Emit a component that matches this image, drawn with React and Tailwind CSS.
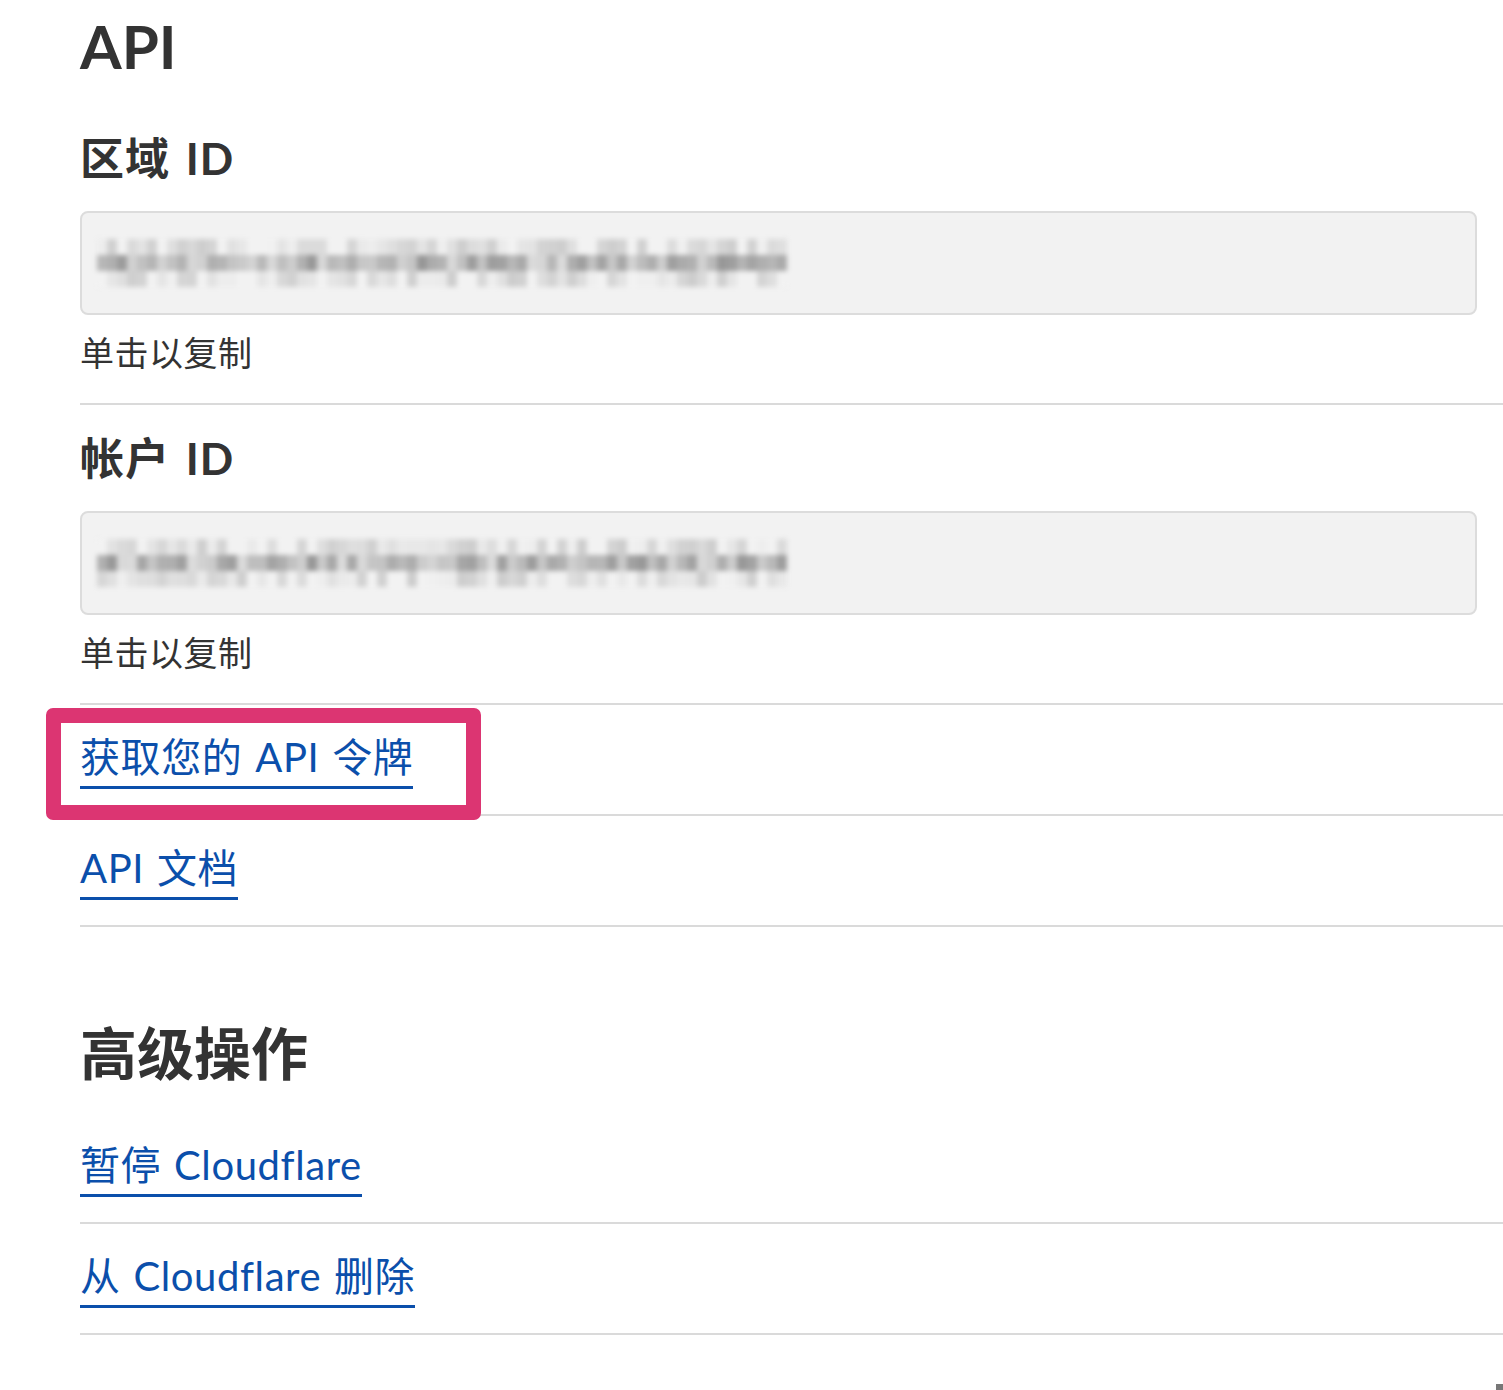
import React from 'react';

const font = { fontFamily: 'Lato, "Noto Sans CJK SC", sans-serif' };

// pseudo-random mosaic for the blurred ids
function makeCells(seed, cols) {
    let s = seed;
    const rand = () => {
        s = (s * 9301 + 49297) % 233280;
        return s / 233280;
    };
    const rows = [];
    for (let r = 0; r < 3; r++) {
        const row = [];
        for (let c = 0; c < cols; c++) {
            const v = rand();
            let shade;
            if (r === 1) shade = Math.round(150 + v * 70);
            else shade = Math.round(205 + v * 36);
            const edge = r !== 1 && rand() < 0.2;
            row.push(edge ? 242 : shade);
        }
        rows.push(row);
    }
    return rows;
}

function Mosaic({ seed }) {
    const rows = makeCells(seed, 69);
    return (
        <div className="flex flex-col blur-[2.5px]">
            {rows.map((row, i) => (
                <div key={i} className="flex h-[16px]">
                    {row.map((g, j) => (
                        <div key={j} className="w-[10px] h-full" style={{ backgroundColor: `rgb(${g},${g},${g})` }} />
                    ))}
                </div>
            ))}
        </div>
    );
}

function IdField({ title, seed }) {
    return (
        <div className="border-b-2 border-[#dadada] pb-[28px]">
            <h2 className="text-[44px] font-bold leading-[56px] tracking-[1px] [word-spacing:4px] text-[#333]">{title}</h2>
            <div className="mt-[25px] mr-[26px] h-[104px] rounded-lg border-2 border-[#dcdcdc] bg-[#f2f2f2] flex items-center pl-[15px] overflow-hidden">
                <Mosaic seed={seed} />
            </div>
            <p className="mt-[16px] text-[34px] leading-[44px] tracking-[0.5px] text-[#333]">单击以复制</p>
        </div>
    );
}

function LinkRow({ children, highlight }) {
    return (
        <div className="relative border-b-2 border-[#dadada] pt-[28px] pb-[25px]">
            <a href="#" className="inline-block text-[40px] leading-[48px] tracking-[0.6px] [word-spacing:2px] pb-[5px] border-b-[3px] border-[#0b4fab] text-[#0b4fab]">
                {children}
            </a>
            {highlight && (
                <div className="absolute left-[-34px] top-[3px] w-[435px] h-[112px] border-[15px] border-[#dc3572] rounded-[7px] pointer-events-none" />
            )}
        </div>
    );
}

export default function App() {
    return (
        <div className="min-h-[1390px] bg-white pl-[80px] pt-[10px] relative" style={font}>
            <h1 className="text-[60px] font-bold leading-[72px] text-[#333]">API</h1>
            <div className="mt-[48px]">
                <IdField title="区域 ID" seed={17} />
            </div>
            <div className="pt-[25px]">
                <IdField title="帐户 ID" seed={83} />
            </div>
            <LinkRow highlight>获取您的 API 令牌</LinkRow>
            <LinkRow>API 文档</LinkRow>

            <h1 className="mt-[90px] text-[57px] font-bold leading-[72px] text-[#333]">高级操作</h1>
            <div className="mt-[24px]">
                <LinkRow>暂停 Cloudflare</LinkRow>
                <LinkRow>从 Cloudflare 删除</LinkRow>
            </div>
            <div className="absolute right-0 bottom-0 w-[7px] h-[6px] bg-[#777]" />
        </div>
    );
}
